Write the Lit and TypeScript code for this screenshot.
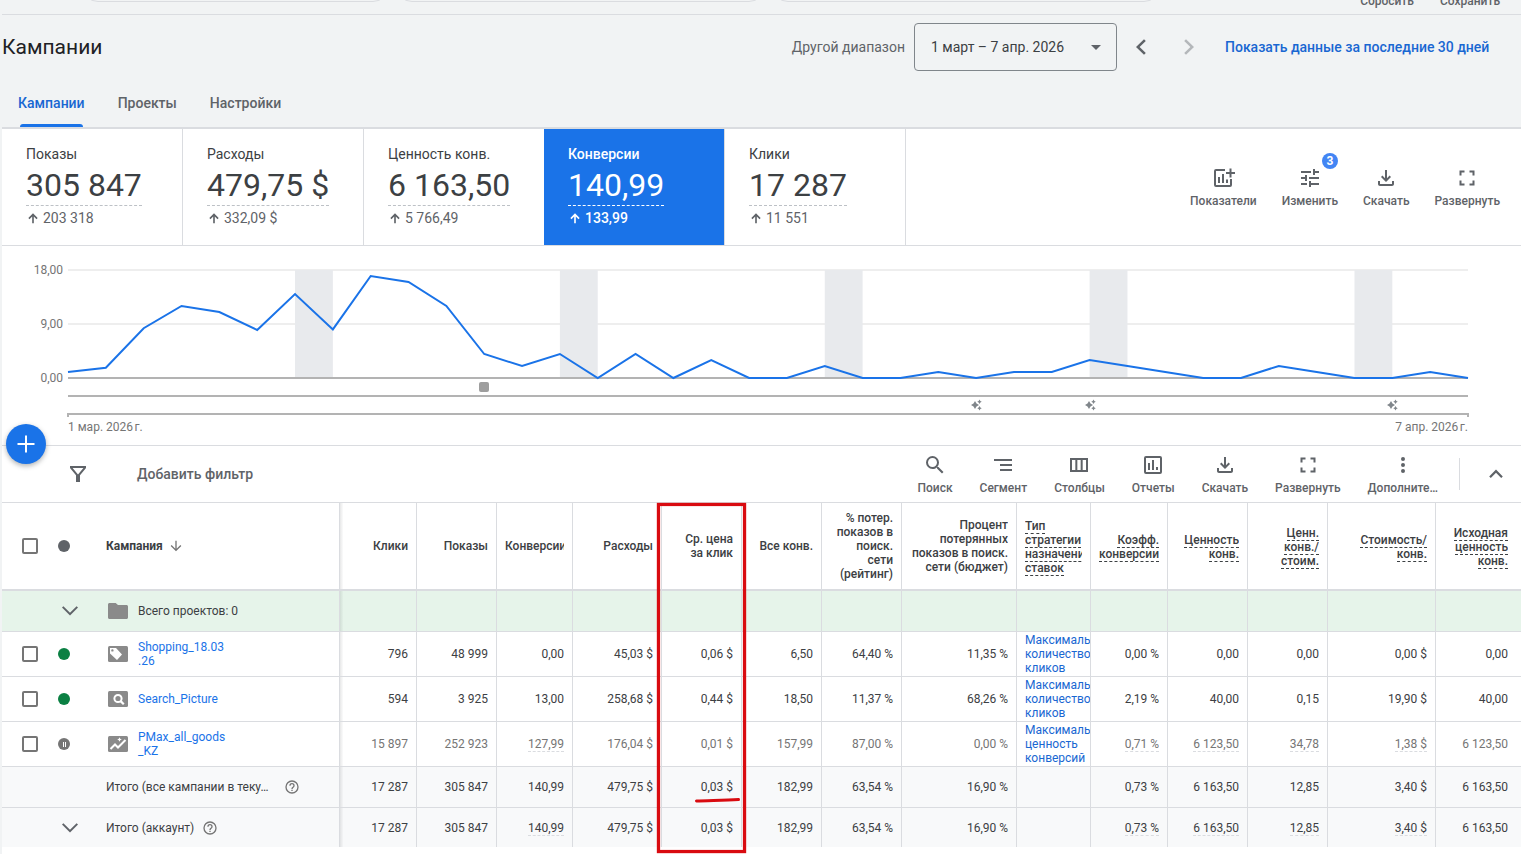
import { LitElement, html, svg, css, nothing, TemplateResult } from "lit";
import { customElement, state } from "lit/decorators.js";
import { classMap } from "lit/directives/class-map.js";

/* Icon paths on a 24x24 grid. */
const ICONS: Record<string, string> = {
  addchart:
    "M24 6v2h-3.500v3.500h-2V8H15V6h3.500V2.500h2V6zM19 19H5V5h9V3H5a2 2 0 0 0-2 2v14a2 2 0 0 0 2 2h14a2 2 0 0 0 2-2v-6h-2v6zM15 13.500V17h2v-3.500h-2zM11 17h2V8h-2v9zM9 17v-6H7v6h2z",
  tune: "M3 17v2h6v-2H3zM3 5v2h10V5H3zm10 16v-2h8v-2h-8v-2h-2v6h2zM7 9v2H3v2h4v2h2V9H7zm14 4v-2H11v2h10zm-6-4h2V7h4V5h-4V3h-2v6z",
  download:
    "M18 15v3H6v-3H4v3c0 1.1.9 2 2 2h12c1.1 0 2-.9 2-2v-3h-2zm-1-4-1.41-1.41L13 12.17V4h-2v8.17L8.41 9.59 7 11l5 5 5-5z",
  fullscreen:
    "M6.500 14.500H4.500v5h5v-2h-3v-3zM4.500 9.500h2v-3h3v-2h-5v5zM17.500 17.500h-3v2h5v-5h-2v3zM14.500 4.500v2h3v3h2v-5h-5z",
  search:
    "M15.500 14h-.79l-.28-.27A6.470 6.470 0 0 0 16 9.500 6.500 6.500 0 1 0 9.500 16c1.610 0 3.090-.59 4.230-1.570l.27.28v.79l5 4.990L20.490 19l-4.990-5zm-6 0C7.010 14 5 11.990 5 9.500S7.010 5 9.500 5 14 7.010 14 9.500 11.990 14 9.500 14z",
  segment: "M9 18h12v-2H9v2zM3 6v2h18V6H3zm6 7h12v-2H9v2z",
  columns: "M3 5v14h18V5H3zm5.330 12H5V7h3.330v10zm5.340 0h-3.330V7h3.330v10zM19 17h-3.330V7H19v10z",
  report:
    "M19 3H5a2 2 0 0 0-2 2v14a2 2 0 0 0 2 2h14a2 2 0 0 0 2-2V5a2 2 0 0 0-2-2zm0 16H5V5h14v14zM7 10h2v7H7zM11 7h2v10h-2zM15 14h2v3h-2z",
  more: "M12 8a2 2 0 1 0 0-4 2 2 0 0 0 0 4zm0 2a2 2 0 1 0 0 4 2 2 0 0 0 0-4zm0 6a2 2 0 1 0 0 4 2 2 0 0 0 0-4z",
  up: "M12 7.600l-6.800 6.800 1.600 1.600L12 10.800l5.200 5.200 1.600-1.600z",
  down: "M5.400 7.200 4 8.600l8 8 8-8-1.400-1.400L12 13.800z",
  filter: "M4 4h16v2l-6 7.300V20h-4v-6.700L4 6V4zm2.600 2 5.400 6.600L17.400 6H6.600z",
  arrowUp: "M4 12l2 2 4.600-4.600V21h2.800V9.400L18 14l2-2-8-8z",
  arrowDown: "M20 12l-1.410-1.410L13 16.170V4h-2v12.170l-5.580-5.590L4 12l8 8z",
  plus: "M20.500 13h-7.500v7.500h-2V13H3.500v-2h7.500V3.500h2V11h7.500z",
  help: "M11 18h2v-2h-2v2zm1-16a10 10 0 1 0 0 20 10 10 0 0 0 0-20zm0 18a8 8 0 1 1 0-16 8 8 0 0 1 0 16zm0-14a4 4 0 0 0-4 4h2c0-1.100.9-2 2-2s2 .9 2 2c0 2-3 1.750-3 5h2c0-2.250 3-2.500 3-5a4 4 0 0 0-4-4z",
  caret: "M6 10l5 5 5-5z",
  prev: "M16.800 6 15 4.200 7 12l8 7.800 1.800-1.800-6.200-6z",
  next: "M7.200 6 9 4.200l8 7.800-8 7.800-1.800-1.800 6.200-6z",
  folder: "M3.500 4h6.200l2.300 2h8.500c.8 0 1.500.7 1.500 1.500v11c0 .8-.7 1.500-1.500 1.500h-17c-.8 0-1.500-.7-1.500-1.500v-13C2 4.700 2.700 4 3.500 4z",
  sparkle: "M10 4l3 5 5 3-5 3-3 5-3-5-5-3 5-3zM19 1l1.700 2.800L23.500 5.500l-2.800 1.700L19 10l-1.700-2.800-2.800-1.700 2.800-1.700zM19 14l1.700 2.800 2.800 1.700-2.800 1.700L19 23l-1.700-2.800-2.800-1.700 2.800-1.700z",
};

const icon = (name: string, size = "m") => html`
  <svg class="icon icon-${size}" viewBox="0 0 24 24" aria-hidden="true"><path d=${ICONS[name]} /></svg>
`;

const kindIcon = (kind: string) => {
  const plate = svg`<rect x="2" y="4" width="20" height="16" rx="1.500" fill="#8a8a8a"/>`;
  const glyph: Record<string, TemplateResult> = {
    shopping: svg`<path fill="#fff" fill-rule="evenodd" d="M4 6h6l6 6.500-5 5.500L4 11.500zM6.400 7.200a1.200 1.200 0 1 0 0 2.400 1.200 1.200 0 0 0 0-2.400z"/>`,
    search: svg`<circle cx="12" cy="11.500" r="3.600" fill="none" stroke="#fff" stroke-width="2"/><path d="M14.600 14.100l3.200 3.200" stroke="#fff" stroke-width="2.200"/>`,
    pmax: svg`<path d="M4.500 17l4.500-4.500 3 3 7.500-7.500" fill="none" stroke="#fff" stroke-width="2"/><path d="M13.500 5.200l.7 1.600 1.600.7-1.600.7-.7 1.600-.7-1.600-1.600-.7 1.600-.7z" fill="#fff"/>`,
  };
  return html`<svg class="icon icon-m" viewBox="0 0 24 24" aria-hidden="true">${plate}${glyph[kind]}</svg>`;
};

const CARDS = [
  { label: "Показы", value: "305 847", delta: "203 318" },
  { label: "Расходы", value: "479,75 $", delta: "332,09 $" },
  { label: "Ценность конв.", value: "6 163,50", delta: "5 766,49" },
  { label: "Конверсии", value: "140,99", delta: "133,99" },
  { label: "Клики", value: "17 287", delta: "11 551" },
];

const SERIES = [
  1, 1.7, 8.3, 12, 11, 8, 14, 8.1, 17, 16, 12, 4, 2, 4, 0, 4, 0, 3, 0,
  0, 2, 0, 0, 1, 0, 1, 1, 3, 2, 1, 0, 0, 2, 1, 0, 0, 1, 0,
];
const DAYS = SERIES.length - 1;
const BANDS = [6, 13, 20, 27, 34];
const NOTES = [24, 27, 35];

const COLUMNS = [
  { key: "clicks", title: "Клики" },
  { key: "impr", title: "Показы" },
  { key: "conv", title: "Конверсии" },
  { key: "cost", title: "Расходы" },
  { key: "cpc", title: "Ср. цена за клик" },
  { key: "all", title: "Все конв." },
  { key: "rank", title: "% потер. показов в поиск. сети (рейтинг)" },
  { key: "budget", title: "Процент потерянных показов в поиск. сети (бюджет)" },
  { key: "strategy", title: "Тип стратегии назначения ставок", hint: true },
  { key: "rate", title: "Коэфф. конверсии", hint: true },
  { key: "value", title: "Ценность конв.", hint: true },
  { key: "roas", title: "Ценн. конв./ стоим.", hint: true },
  { key: "cpa", title: "Стоимость/ конв.", hint: true },
  { key: "orig", title: "Исходная ценность конв.", hint: true },
];

const CAMPAIGNS = [
  {
    name: "Shopping_18.03.26", kind: "shopping", paused: false,
    cells: ["796", "48 999", "0,00", "45,03 $", "0,06 $", "6,50", "64,40 %", "11,35 %", "Максимальное количество кликов", "0,00 %", "0,00", "0,00", "0,00 $", "0,00"],
  },
  {
    name: "Search_Picture", kind: "search", paused: false,
    cells: ["594", "3 925", "13,00", "258,68 $", "0,44 $", "18,50", "11,37 %", "68,26 %", "Максимальное количество кликов", "2,19 %", "40,00", "0,15", "19,90 $", "40,00"],
  },
  {
    name: "PMax_all_goods_KZ", kind: "pmax", paused: true,
    cells: ["15 897", "252 923", "127,99", "176,04 $", "0,01 $", "157,99", "87,00 %", "0,00 %", "Максимальная ценность конверсий", "0,71 %", "6 123,50", "34,78", "1,38 $", "6 123,50"],
  },
];

const TOTALS = ["17 287", "305 847", "140,99", "479,75 $", "0,03 $", "182,99", "63,54 %", "16,90 %", "", "0,73 %", "6 163,50", "12,85", "3,40 $", "6 163,50"];
const DOTTED = new Set(["conv", "rate", "value", "roas", "cpa"]);

@customElement("app-root")
export class AppRoot extends LitElement {
  @state() private tab = 0;
  @state() private card = 3;

  static styles = css`
    :host {
      display: block;
      min-height: 100vh;
      box-sizing: border-box;
      padding-left: 2px;
      background: #f1f3f4;
      color: #3c4043;
      font: 400 14px/20px Roboto, "Noto Sans", sans-serif;
      overflow: hidden;
    }
    * { box-sizing: border-box; }
    button, select, input { font: inherit; color: inherit; }
    button { border: 0; padding: 0; background: none; cursor: pointer; }
    a { color: #1a73e8; text-decoration: none; }
    .icon { display: block; flex: none; fill: currentColor; }
    .icon-s { width: 14px; height: 14px; }
    .icon-h { width: 16px; height: 16px; }
    .icon-m { width: 24px; height: 24px; }
    .icon-n { width: 12px; height: 12px; }

    .strip {
      display: flex;
      align-items: flex-end;
      height: 15px;
      padding: 0 21px 0 80px;
      border-bottom: 1px solid #dadce0;
      overflow: hidden;
      font-weight: 500;
      font-size: 12px;
      line-height: 16px;
      color: #5f6368;
    }
    .pills {
      display: grid;
      grid-template-columns: 307fr 370fr 388fr;
      gap: 7px;
      flex: 1;
      padding-bottom: 12px;
      margin-right: 200px;
    }
    .pill { height: 32px; border: 1px solid #dadce0; border-radius: 16px; }
    .strip-actions { display: flex; gap: 26px; padding-bottom: 5px; }

    .head { display: flex; align-items: center; padding: 8px 25px 8px 0; }
    h1 { flex: 1; margin: 0; font-weight: 400; font-size: 21px; line-height: 28px; color: #202124; }
    .range-label { margin-right: 9px; color: #5f6368; }
    .range { position: relative; margin-right: 12px; }
    .range select {
      appearance: none;
      display: block;
      width: 203px;
      height: 48px;
      padding: 0 16px;
      border: 1px solid #80868b;
      border-radius: 4px;
      background: transparent;
    }
    .range .icon { position: absolute; right: 8px; top: 12px; color: #5f6368; pointer-events: none; width: 24px; }
    .step { margin-right: 24px; color: #5f6368; }
    .step[disabled] { color: #b4b7ba; cursor: default; }
    .last30 { min-width: 271px; color: #1967d2; font-weight: 500; white-space: nowrap; }

    .tabs { display: flex; gap: 33px; padding: 0 16px; border-bottom: 2px solid #dadce0; }
    .tab {
      padding: 14px 0 11px;
      border-bottom: 3px solid transparent;
      font-weight: 500;
      color: #5f6368;
    }
    .tab.on { color: #1967d2; position: relative; }
    .tab.on::after {
      content: "";
      position: absolute;
      left: 2px;
      right: 2px;
      bottom: -3px;
      height: 3px;
      border-radius: 3px 3px 0 0;
      background: #1a73e8;
    }

    .body { background: #fff; min-height: 725px; }
    .cards { display: flex; border-bottom: 1px solid #dadce0; }
    .card {
      width: 181px;
      padding: 15px 8px 17px 24px;
      border-right: 1px solid #dadce0;
      text-align: left;
      display: flex;
      flex-direction: column;
      align-items: flex-start;
    }
    .card.on { margin-left: -1px; background: #1a73e8; color: #fff; font-weight: 500; }
    .card-value {
      padding-top: 1px;
      margin-bottom: 2px;
      border-bottom: 1px dashed #bdc1c6;
      font-weight: 400;
      font-size: 32px;
      line-height: 40px;
      color: #3c4043;
    }
    .card-delta { display: flex; align-items: center; gap: 3px; color: #5f6368; }
    .card.on .card-value, .card.on .card-delta { color: #fff; border-color: #fff; }
    .tools { display: flex; gap: 27px; color: #5f6368; }
    .cards .tools { gap: 25px; margin-left: auto; padding: 37px 21px 0 0; }
    .tool {
      display: flex;
      flex-direction: column;
      align-items: center;
      gap: 3px;
      position: relative;
      font-weight: 500;
      font-size: 12px;
      line-height: 16px;
      white-space: nowrap;
      align-self: flex-start;
    }
    .badge {
      position: absolute;
      top: -13px;
      right: 0;
      width: 16px;
      height: 16px;
      border-radius: 8px;
      background: #4285f4;
      color: #fff;
      font-weight: 700;
      text-align: center;
    }

    .chart {
      display: grid;
      grid-template-columns: 61px 1fr;
      column-gap: 5px;
      padding: 18px 53px 10px 0;
      border-bottom: 1px solid #dadce0;
      font-size: 12px;
      color: #757575;
    }
    .axis {
      display: flex;
      flex-direction: column;
      justify-content: space-between;
      height: 120px;
      line-height: 12px;
      text-align: right;
    }
    .plot { position: relative; }
    .plot svg.lines { display: block; width: 100%; height: 154px; overflow: visible; }
    .lines polyline, .lines line, .lines path { vector-effect: non-scaling-stroke; }
    .mark { position: absolute; transform: translateX(-50%); color: #80868b; }
    .mark.note { top: 135px; }
    .mark.event { top: 118px; width: 10px; height: 10px; border-radius: 2px; background: #9e9e9e; }
    .dates { grid-column: 2; display: flex; justify-content: space-between; padding-top: 1px; line-height: 16px; }

    .filters { display: flex; align-items: center; height: 57px; padding-left: 64px; border-bottom: 1px solid #dadce0; color: #5f6368; }
    .add-filter { margin-left: 47px; margin-right: auto; font-weight: 500; }
    .filters .tools { align-self: stretch; padding-top: 7px; }
    .rule { width: 1px; height: 32px; margin: 0 24px 0 21px; background: #dadce0; }
    .collapse { margin-right: 13px; }

    .table-wrap { position: relative; }
    table {
      width: 100%;
      table-layout: fixed;
      border-collapse: separate;
      border-spacing: 0;
      font-size: 12px;
      line-height: 14px;
    }
    .c-check { width: 44px; }
    .c-state { width: 52px; }
    .c-name { width: 242px; }
    .c-clicks { width: 77px; }
    .c-impr, .c-cpc, .c-all, .c-rank, .c-value, .c-roas { width: 80px; }
    .c-conv { width: 76px; }
    .c-cost { width: 89px; }
    .c-budget { width: 115px; }
    .c-strategy { width: 74px; }
    .c-rate { width: 77px; }
    .c-cpa { width: 108px; }
    th, td {
      height: 45px;
      padding: 0 8px;
      border-right: 1px solid #dadce0;
      border-bottom: 1px solid #dadce0;
      text-align: right;
      vertical-align: middle;
      font-weight: 400;
    }
    thead th { height: 88px; border-bottom-width: 2px; font-weight: 500; }
    .k-check, .k-state { border-right: 0; }
    .k-check { padding: 0 0 0 20px; text-align: left; }
    .k-state { padding: 0 0 0 12px; text-align: left; }
    .k-name { text-align: left; }
    .k-orig { border-right: 0; padding-right: 13px; }
    .k-clicks { background-image: linear-gradient(90deg, rgba(60, 64, 67, 0.12), rgba(60, 64, 67, 0.02)); background-size: 3px 100%; background-repeat: no-repeat; }
    .k-strategy { text-align: left; }
    tbody .k-strategy { padding-right: 0; }
    .clip { overflow: hidden; }
    .clip.hinted { padding: 3px 0 1px; }
    .hint { border-bottom: 1px dashed #3c4043; }
    .dots { border-bottom: 1px dashed #dadce0; }
    .projects td, .projects th { height: 41px; background-color: #e6f4ea; }
    .total td, .total th { height: 41px; background-color: #f8f9fa; }
    .total.last td, .total.last th { height: 39px; border-bottom: 0; }
    .paused td { color: #757575; }
    .strategy { color: #1967d2; }
    .name { display: flex; align-items: center; gap: 8px; }
    .name a { width: 89px; overflow-wrap: anywhere; }
    .sort { gap: 5px; font-weight: 700; }
    .long { width: 170px; white-space: nowrap; }
    .fold { display: block; color: #5f6368; }
    input[type="checkbox"] {
      appearance: none;
      display: block;
      width: 16px;
      height: 16px;
      margin: 0;
      border: 2px solid #757575;
      border-radius: 2px;
      background: #fff;
    }
    .dot { display: block; width: 12px; height: 12px; border-radius: 6px; background: #0b8043; }
    .dot.grey { background: #5f6368; }
    .dot.hold { display: flex; justify-content: center; align-items: center; gap: 1px; background: #757575; }
    .dot.hold::before, .dot.hold::after { content: ""; width: 1px; height: 5px; background: #fff; }
    .grey-icon { color: #8a8a8a; }
    .muted { color: #757575; }

    .frame {
      position: absolute;
      left: 655px;
      top: 0;
      width: 89px;
      height: 350px;
      border: 3px solid #d90b10;
      box-shadow: 0 0 1px #d90b10, inset 0 0 1px #d90b10;
      pointer-events: none;
    }
    .stroke { position: absolute; left: 692px; top: 293px; width: 48px; height: 8px; pointer-events: none; }
    .fab {
      position: absolute;
      left: 4px;
      bottom: -18px;
      width: 40px;
      height: 40px;
      border-radius: 20px;
      display: flex;
      align-items: center;
      justify-content: center;
      background: #1a73e8;
      color: #fff;
      box-shadow: 0 2px 5px rgba(60, 64, 67, 0.4);
      z-index: 1;
    }
    .chart-wrap { position: relative; }
  `;

  private tool(name: string, label: string, badge?: string) {
    return html`<button class="tool">
      ${icon(name)}<span>${label}</span>${badge ? html`<span class="badge">${badge}</span>` : nothing}
    </button>`;
  }

  private chart() {
    const x = (i: number) => (i / DAYS) * 1400;
    const y = (v: number) => 114 - v * 6;
    const left = (i: number) => `left:${(i / DAYS) * 100}%`;
    return html`<div class="chart-wrap">
      <div class="chart">
        <div class="axis"><span>18,00</span><span>9,00</span><span>0,00</span></div>
        <div class="plot">
          <svg class="lines" viewBox="0 0 1400 154" preserveAspectRatio="none" role="img" aria-label="Конверсии">
            <g stroke="#eeeeee" stroke-width="2">
              <line x1="0" y1="6" x2="1400" y2="6" /><line x1="0" y1="60" x2="1400" y2="60" />
            </g>
            ${BANDS.map((b) => svg`<rect x=${x(b)} y="6" width=${x(1)} height="108" fill="#e8eaed" />`)}
            <g stroke="#b3b3b3" stroke-width="2" fill="none">
              <line x1="0" y1="114" x2="1400" y2="114" /><line x1="0" y1="132" x2="1400" y2="132" />
              <path d="M0 153V150H1400V153" />
            </g>
            <polyline
              points=${SERIES.map((v, i) => `${x(i)},${y(v)}`).join(" ")}
              fill="none" stroke="#1a73e8" stroke-width="2" />
          </svg>
          <span class="mark event" style=${left(11)}></span>
          ${NOTES.map((n) => html`<span class="mark note" style=${left(n)}>${icon("sparkle", "n")}</span>`)}
        </div>
        <div class="dates"><span>1 мар. 2026\u202fг.</span><span>7 апр. 2026\u202fг.</span></div>
      </div>
      <button class="fab" aria-label="Создать">${icon("plus")}</button>
    </div>`;
  }

  private cells(values: string[], dotted: boolean) {
    return COLUMNS.map((c, i) => {
      const v = values[i] ?? "";
      const body =
        c.key === "strategy" && v
          ? html`<div class="clip"><a class="strategy" href="#">${v}</a></div>`
          : dotted && DOTTED.has(c.key)
            ? html`<span class="dots">${v}</span>`
            : v;
      return html`<td class="k-${c.key}">${body}</td>`;
    });
  }

  private table() {
    return html`<div class="table-wrap">
      <table>
        <colgroup>
          <col class="c-check" /><col class="c-state" /><col class="c-name" />
          ${COLUMNS.map((c) => html`<col class="c-${c.key}" />`)}
        </colgroup>
        <thead>
          <tr>
            <th class="k-check"><input type="checkbox" aria-label="Выбрать все" /></th>
            <th class="k-state"><span class="dot grey"></span></th>
            <th class="k-name"><div class="name sort">Кампания <span class="muted">${icon("arrowDown", "h")}</span></div></th>
            ${COLUMNS.map(
              (c) => html`<th class="k-${c.key}">
                <div class=${classMap({ clip: true, hinted: !!c.hint })}>${c.hint ? html`<span class="hint">${c.title}</span>` : c.title}</div>
              </th>`,
            )}
          </tr>
        </thead>
        <tbody>
          <tr class="projects">
            <td class="k-check"></td>
            <td class="k-state"><button class="fold" aria-label="Развернуть">${icon("down")}</button></td>
            <td class="k-name"><div class="name"><span class="grey-icon">${icon("folder")}</span>Всего проектов: 0</div></td>
            ${this.cells([], false)}
          </tr>
          ${CAMPAIGNS.map(
            (r) => html`<tr class=${classMap({ paused: r.paused })}>
              <td class="k-check"><input type="checkbox" aria-label=${r.name} /></td>
              <td class="k-state"><span class=${classMap({ dot: true, hold: r.paused })}></span></td>
              <td class="k-name"><div class="name">${kindIcon(r.kind)}<a href="#">${r.name}</a></div></td>
              ${this.cells(r.cells, r.paused)}
            </tr>`,
          )}
          <tr class="total">
            <td class="k-check"></td>
            <td class="k-state"></td>
            <td class="k-name">
              <div class="name"><span class="long">Итого (все кампании в теку…</span><span class="muted">${icon("help", "h")}</span></div>
            </td>
            ${this.cells(TOTALS, false)}
          </tr>
          <tr class="total last">
            <td class="k-check"></td>
            <td class="k-state"><button class="fold" aria-label="Развернуть">${icon("down")}</button></td>
            <td class="k-name"><div class="name">Итого (аккаунт)<span class="muted">${icon("help", "h")}</span></div></td>
            ${this.cells(TOTALS, true)}
          </tr>
        </tbody>
      </table>
      <div class="frame"></div>
      <svg class="stroke" viewBox="0 0 48 8" aria-hidden="true">
        <path d="M2.500 5c10-.6 27-.6 42-1.500" fill="none" stroke="#d90b10" stroke-width="3" stroke-linecap="round" />
      </svg>
    </div>`;
  }

  render() {
    return html`
      <div class="strip">
        <div class="pills"><div class="pill"></div><div class="pill"></div><div class="pill"></div></div>
        <div class="strip-actions"><button>Сбросить</button><button>Сохранить</button></div>
      </div>
      <header class="head">
        <h1>Кампании</h1>
        <label class="range-label" for="range">Другой диапазон</label>
        <div class="range">
          <select id="range"><option>1 март – 7 апр. 2026</option></select>
          ${icon("caret")}
        </div>
        <button class="step" aria-label="Назад">${icon("prev")}</button>
        <button class="step" aria-label="Вперед" disabled>${icon("next")}</button>
        <a class="last30" href="#">Показать данные за последние 30 дней</a>
      </header>
      <nav class="tabs">
        ${["Кампании", "Проекты", "Настройки"].map(
          (t, i) => html`<button class=${classMap({ tab: true, on: i === this.tab })} @click=${() => (this.tab = i)}>${t}</button>`,
        )}
      </nav>
      <main class="body">
        <section class="cards">
          ${CARDS.map(
            (c, i) => html`<button class=${classMap({ card: true, on: i === this.card })} @click=${() => (this.card = i)}>
              <span>${c.label}</span>
              <span class="card-value">${c.value}</span>
              <span class="card-delta">${icon("arrowUp", "s")}${c.delta}</span>
            </button>`,
          )}
          <div class="tools">
            ${this.tool("addchart", "Показатели")} ${this.tool("tune", "Изменить", "3")}
            ${this.tool("download", "Скачать")} ${this.tool("fullscreen", "Развернуть")}
          </div>
        </section>
        ${this.chart()}
        <section class="filters">
          ${icon("filter")}
          <button class="add-filter">Добавить фильтр</button>
          <div class="tools">
            ${this.tool("search", "Поиск")} ${this.tool("segment", "Сегмент")} ${this.tool("columns", "Столбцы")}
            ${this.tool("report", "Отчеты")} ${this.tool("download", "Скачать")}
            ${this.tool("fullscreen", "Развернуть")} ${this.tool("more", "Дополните…")}
          </div>
          <span class="rule"></span>
          <button class="collapse" aria-label="Свернуть">${icon("up")}</button>
        </section>
        ${this.table()}
      </main>
    `;
  }
}
